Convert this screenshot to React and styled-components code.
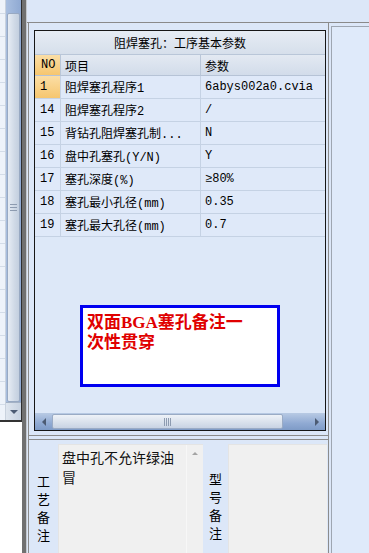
import React from 'react'
import styled, { createGlobalStyle } from 'styled-components'

const GlobalStyle = createGlobalStyle`
  html, body {
    margin: 0;
    padding: 0;
    background: #ffffff;
  }
  body {
    font-family: "Liberation Mono", "Noto Sans CJK SC", monospace;
    font-size: 12px;
    color: #000;
  }
`

const Page = styled.div`
  display: flex;
  width: 369px;
  height: 553px;
  overflow: hidden;
`

const LeftPane = styled.div`
  width: 22px;
  display: flex;
  flex-direction: column;
  background: #ffffff;
`

const GridStrip = styled.div`
  height: 420px;
  display: flex;
  border-bottom: 2px solid #333;
  border-right: 1px solid #2e2e2e;
`

const GridCells = styled.div`
  width: 5px;
  background: repeating-linear-gradient(
    to bottom,
    #eef3fa 0px,
    #eef3fa 22px,
    #d3dce8 22px,
    #d3dce8 23px
  );
  background-position: 0 -9px;
  border-right: 1px solid #c9d2de;
`

const VScroll = styled.div`
  flex: 1;
  display: flex;
  flex-direction: column;
  background: linear-gradient(to right, #a9bfe0, #8fa9d2);
`

const VTrack = styled.div`
  height: 13px;
`

const VThumb = styled.div`
  flex: 1;
  margin: 0 1px;
  border: 1px solid #98a9c2;
  border-radius: 2px;
  background: linear-gradient(to right, #e6ecf4, #cfd9e6 60%, #c3cfdf);
  display: flex;
  align-items: center;
  justify-content: center;
`

const HGrip = styled.div`
  width: 7px;
  height: 7px;
  background: repeating-linear-gradient(
    to bottom,
    #8d9bb0 0px,
    #8d9bb0 1px,
    transparent 1px,
    transparent 3px
  );
`

const VArrowBtn = styled.div`
  height: 17px;
  background: linear-gradient(to right, #dfe6ef, #c6d1e0);
  border-top: 1px solid #a3b1c5;
  display: flex;
  align-items: center;
  justify-content: center;
`

const Tri = styled.div`
  width: 0;
  height: 0;
  ${({ dir, size = 4, color = '#4c5b73' }) =>
    dir === 'down'
      ? `border-left: ${size}px solid transparent; border-right: ${size}px solid transparent; border-top: ${size}px solid ${color};`
      : dir === 'up'
      ? `border-left: ${size}px solid transparent; border-right: ${size}px solid transparent; border-bottom: ${size}px solid ${color};`
      : dir === 'left'
      ? `border-top: ${size}px solid transparent; border-bottom: ${size}px solid transparent; border-right: ${size}px solid ${color};`
      : `border-top: ${size}px solid transparent; border-bottom: ${size}px solid transparent; border-left: ${size}px solid ${color};`}
`

const Splitter = styled.div`
  width: 4px;
  background: #707070;
`

const Main = styled.div`
  flex: 1;
  display: flex;
  flex-direction: column;
  background: #dce7f8;
  border-left: 1px solid #c4c8ce;
`

const TopBar = styled.div`
  height: 22px;
  border-bottom: 1px solid #8a8a8a;
  flex-shrink: 0;
`

const Body = styled.div`
  flex: 1;
  display: flex;
`

const Center = styled.div`
  width: 301px;
  margin-left: 1px;
  box-sizing: border-box;
  border-left: 1px solid #8c8c8c;
  border-right: 1px solid #8c8c8c;
  display: flex;
  flex-direction: column;
`

const Upper = styled.div`
  padding: 7px 0 4px 5px;
  border-bottom: 1px solid #8c8c8c;
`

const Frame = styled.div`
  width: 292px;
  height: 401px;
  box-sizing: border-box;
  border: 1px solid #161616;
  display: flex;
  flex-direction: column;
  background: #dde8f8;
`

const TitleRow = styled.div`
  height: 23px;
  border-bottom: 1px solid #b9c6d8;
  background: linear-gradient(to bottom, #e6ecf4, #d6dfeb);
  display: flex;
  align-items: center;
  justify-content: center;
  font-family: "Noto Sans CJK SC", sans-serif;
  font-size: 12px;
`

const Row = styled.div`
  display: flex;
  height: ${({ header }) => (header ? 20 : 22)}px;
  border-bottom: 1px solid ${({ header }) => (header ? '#b6c3d6' : '#c5d2e4')};
  background: ${({ header }) =>
    header ? 'linear-gradient(to bottom, #e3e9f2, #d2dcea)' : '#dfe9f9'};
`

const Cell = styled.div`
  box-sizing: border-box;
  width: ${({ w }) => w}px;
  padding-left: ${({ pad = 4 }) => pad}px;
  display: flex;
  align-items: center;
  white-space: nowrap;
  overflow: hidden;
  font-family: ${({ sans }) =>
    sans ? '"Noto Sans CJK SC", sans-serif' : '"Liberation Mono", "Noto Sans CJK SC", monospace'};
  border-right: ${({ last, header }) =>
    last ? 'none' : header ? '1px solid #b9c6d8' : '1px solid #c5d2e4'};
  background: ${({ mark }) =>
    mark ? 'linear-gradient(to bottom, #fbdea6, #f6c66f)' : 'transparent'};
`

const EmptyArea = styled.div`
  flex: 1;
  padding: 68px 0 0 45px;
`

const NoteBox = styled.div`
  width: 200px;
  height: 82px;
  box-sizing: border-box;
  border: 3px solid #0000f0;
  background: #ffffff;
  padding: 5px 0 0 4px;
  color: #e00000;
  font-family: "Liberation Serif", "Noto Sans CJK SC", serif;
  font-weight: bold;
  font-size: 17px;
  line-height: 20px;
`

const HScroll = styled.div`
  height: 17px;
  display: flex;
  align-items: stretch;
  background: linear-gradient(to bottom, #b8cae4, #90aad3 60%, #7e9bc7);
`

const ArrowBtn = styled.div`
  width: 17px;
  display: flex;
  align-items: center;
  justify-content: center;
`

const HThumb = styled.div`
  width: 229px;
  margin: 1px 0;
  border: 1px solid #9aabc5;
  border-radius: 2px;
  background: linear-gradient(to bottom, #eef2f8, #d9e1ec 55%, #c8d3e3);
  display: flex;
  align-items: center;
  justify-content: center;
`

const VGrip = styled.div`
  width: 7px;
  height: 8px;
  background: repeating-linear-gradient(
    to right,
    #8d9bb0 0px,
    #8d9bb0 1px,
    transparent 1px,
    transparent 2px
  );
`

const Spacer = styled.div`
  flex: 1;
`

const Lower = styled.div`
  flex: 1;
  margin-top: 3px;
  border-top: 1px solid #8c8c8c;
  display: flex;
`

const Label = styled.div`
  width: ${({ w }) => w}px;
  display: flex;
  justify-content: center;
  padding-top: ${({ top }) => top}px;
  box-sizing: border-box;
`

const LabelText = styled.div`
  width: 13px;
  font-family: "Noto Sans CJK SC", sans-serif;
  font-size: 13px;
  line-height: 18px;
  word-break: break-all;
`

const MemoBox = styled.div`
  width: ${({ w }) => w}px;
  margin-top: 4px;
  box-sizing: border-box;
  background: #f0f0f0;
  border-top: 1px solid #e4e4e4;
  border-left: 1px solid #e4e4e4;
  display: flex;
`

const MemoText = styled.div`
  flex: 1;
  padding: 2px 0 0 3px;
  font-family: "Noto Sans CJK SC", sans-serif;
  font-size: 14px;
  line-height: 20px;
  color: #111;
`

const MemoScroll = styled.div`
  width: 17px;
  border-left: 1px solid #f7f7f7;
  display: flex;
  justify-content: center;
  padding-top: 7px;
  box-sizing: border-box;
`

const RightPanel = styled.div`
  flex: 1;
  margin: 3px 0 0 2px;
  border-left: 1px solid #9ea6b1;
  border-top: 1px solid #9ea6b1;
  background: #dfeafa;
`

const rows = [
  { no: '1', item: '阻焊塞孔程序1', value: '6abys002a0.cvia', mark: true },
  { no: '14', item: '阻焊塞孔程序2', value: '/' },
  { no: '15', item: '背钻孔阻焊塞孔制...', value: 'N' },
  { no: '16', item: '盘中孔塞孔(Y/N)', value: 'Y' },
  { no: '17', item: '塞孔深度(%)', value: '≥80%' },
  { no: '18', item: '塞孔最小孔径(mm)', value: '0.35' },
  { no: '19', item: '塞孔最大孔径(mm)', value: '0.7' },
]

const App = () => {
  return (
    <Page>
      <GlobalStyle />
      <LeftPane>
        <GridStrip>
          <GridCells />
          <VScroll>
            <VTrack />
            <VThumb>
              <HGrip />
            </VThumb>
            <VArrowBtn>
              <Tri dir='down' size={4} />
            </VArrowBtn>
          </VScroll>
        </GridStrip>
      </LeftPane>
      <Splitter />
      <Main>
        <TopBar />
        <Body>
          <Center>
            <Upper>
              <Frame>
                <TitleRow>阻焊塞孔：工序基本参数</TitleRow>
                <Row header>
                  <Cell w={26} pad={6} header mark>NO</Cell>
                  <Cell w={140} header sans>项目</Cell>
                  <Cell w={124} header last sans>参数</Cell>
                </Row>
                {rows.map((r) => (
                  <Row key={r.no}>
                    <Cell w={26} pad={5} mark={r.mark}>{r.no}</Cell>
                    <Cell w={140}>{r.item}</Cell>
                    <Cell w={124} last>{r.value}</Cell>
                  </Row>
                ))}
                <EmptyArea>
                  <NoteBox>
                    双面BGA塞孔备注一<br />次性贯穿
                  </NoteBox>
                </EmptyArea>
                <HScroll>
                  <ArrowBtn>
                    <Tri dir='left' size={4} />
                  </ArrowBtn>
                  <HThumb>
                    <VGrip />
                  </HThumb>
                  <Spacer />
                  <ArrowBtn>
                    <Tri dir='right' size={4} />
                  </ArrowBtn>
                </HScroll>
              </Frame>
            </Upper>
            <Lower>
              <Label w={29} top={32}>
                <LabelText>工艺备注</LabelText>
              </Label>
              <MemoBox w={145}>
                <MemoText>盘中孔不允许绿油冒</MemoText>
                <MemoScroll>
                  <Tri dir='up' size={3} color='#a4a4a4' />
                </MemoScroll>
              </MemoBox>
              <Label w={25} top={30}>
                <LabelText>型号备注</LabelText>
              </Label>
              <MemoBox w={99} />
            </Lower>
          </Center>
          <RightPanel />
        </Body>
      </Main>
    </Page>
  )
}

export default App
